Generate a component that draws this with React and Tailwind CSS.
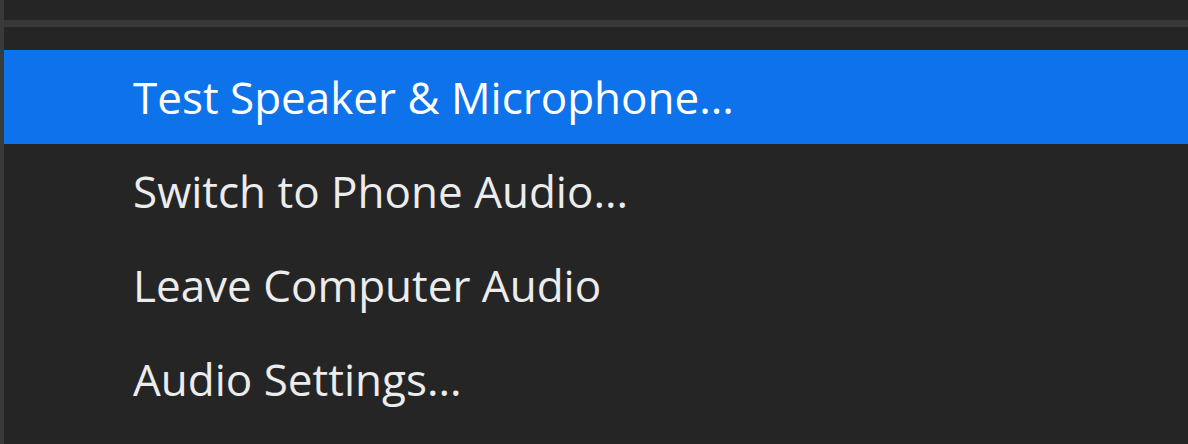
import React from 'react';

const items = [
  { label: 'Test Speaker & Microphone...', active: true },
  { label: 'Switch to Phone Audio...' },
  { label: 'Leave Computer Audio' },
  { label: 'Audio Settings...' },
];

export default function App() {
  return (
    <div className="flex h-[444px] w-[1188px] overflow-hidden bg-[#252525]" style={{ fontFamily: '"Open Sans", "Noto Sans", sans-serif' }}>
      {/* window edge */}
      <div className="w-[4px] shrink-0 bg-[#3a3a3a]" />

      <div className="flex flex-1 flex-col">
        <div className="h-[20px]" />
        <div className="h-[7px] bg-[#383838]" />
        <div className="h-[23px]" />

        {items.map((item) => (
          <div
            key={item.label}
            className={`flex h-[94px] shrink-0 items-center pl-[129px] text-[44px] leading-none ${
              item.active ? 'bg-[#0e72ea] text-white' : 'text-[#ececec]'
            }`}
          >
            {item.label}
          </div>
        ))}
      </div>
    </div>
  );
}
